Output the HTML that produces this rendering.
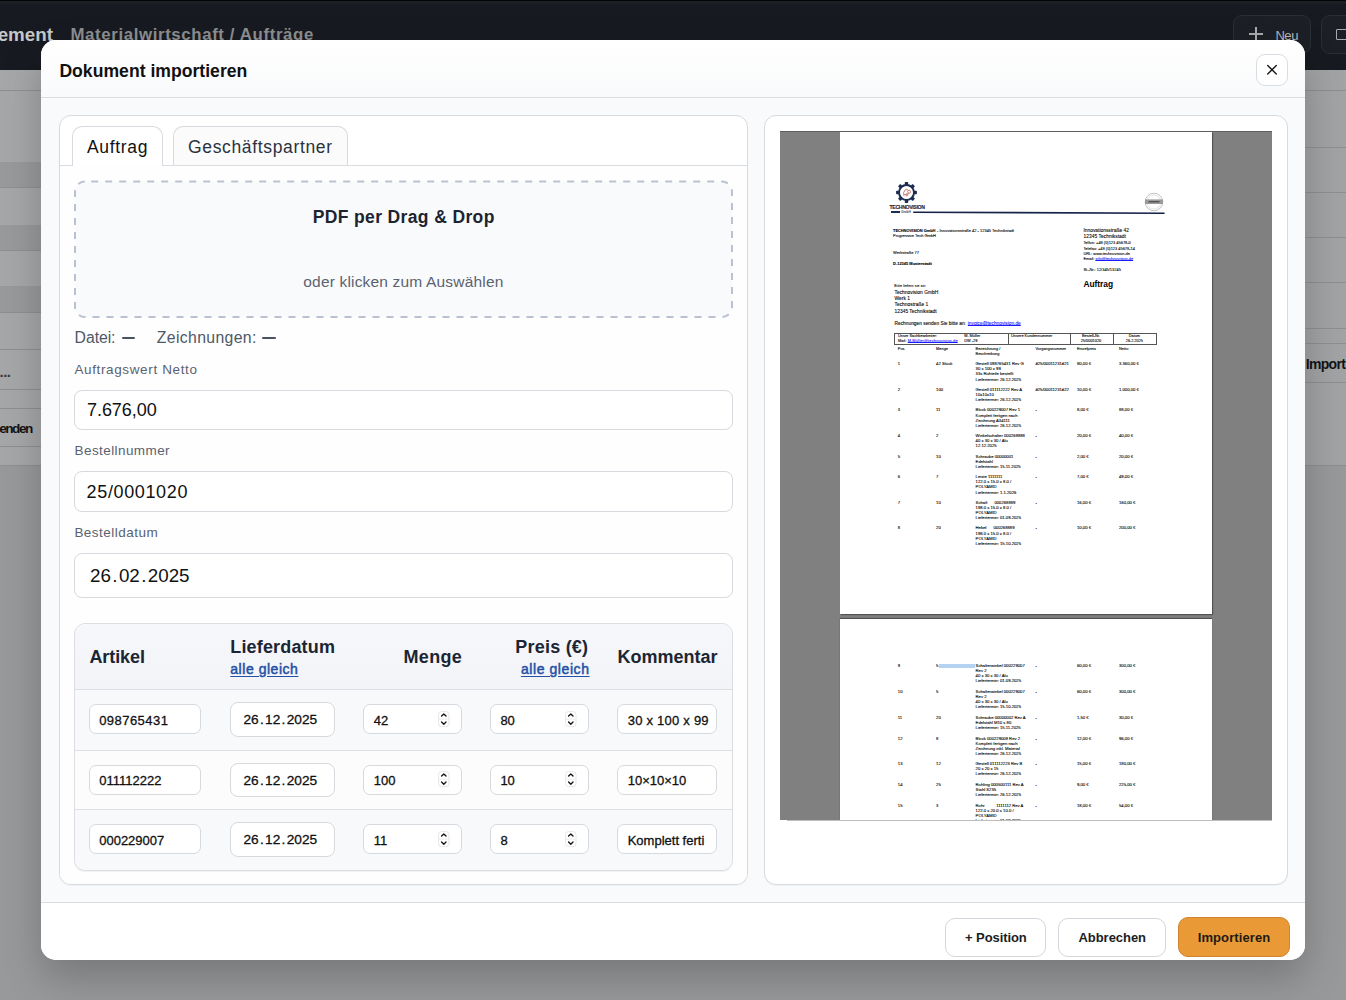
<!DOCTYPE html><html><head><meta charset="utf-8"><style>
*{box-sizing:border-box;margin:0;padding:0}
html,body{width:1346px;height:1000px;overflow:hidden;background:#999a9c;font-family:"Liberation Sans",sans-serif}
.a{position:absolute}
.t{position:absolute;white-space:pre;line-height:normal}
</style></head><body><div class="a" style="left:0;top:0;width:1346px;height:1000px;overflow:hidden"><div class="a" style="left:0px;top:0px;width:1346px;height:70px;background:#171a20"></div><div class="a" style="left:0px;top:0px;width:1346px;height:1.2px;background:#030406"></div><div class="a" style="left:0px;top:1.2px;width:1346px;height:2.4px;background:#1c1f24"></div><div class="a" style="left:0px;top:70px;width:1346px;height:395px;background:#a6a7a8"></div><div class="a" style="left:0px;top:465px;width:1346px;height:535px;background:#98999b"></div><div class="a" style="left:0px;top:162px;width:41px;height:25px;background:#999a9b"></div><div class="a" style="left:0px;top:225px;width:41px;height:25px;background:#999a9b"></div><div class="a" style="left:0px;top:286px;width:41px;height:26px;background:#999a9b"></div><div class="a" style="left:0px;top:90px;width:41px;height:1px;background:#8e8f91"></div><div class="a" style="left:0px;top:187px;width:41px;height:1px;background:#8e8f91"></div><div class="a" style="left:0px;top:250px;width:41px;height:1px;background:#8e8f91"></div><div class="a" style="left:0px;top:312px;width:41px;height:1px;background:#8e8f91"></div><div class="a" style="left:0px;top:349px;width:41px;height:1px;background:#8e8f91"></div><div class="a" style="left:0px;top:389px;width:41px;height:1px;background:#8e8f91"></div><div class="a" style="left:0px;top:408px;width:41px;height:1px;background:#8e8f91"></div><div class="a" style="left:0px;top:446px;width:41px;height:1px;background:#8e8f91"></div><div class="a" style="left:0px;top:465px;width:41px;height:1px;background:#8e8f91"></div><div class="a" style="left:1305px;top:70px;width:41px;height:395px;background:#a2a3a4"></div><div class="a" style="left:1305px;top:90px;width:41px;height:1px;background:#8e8f91"></div><div class="a" style="left:1305px;top:147px;width:41px;height:1px;background:#8e8f91"></div><div class="a" style="left:1305px;top:192px;width:41px;height:1px;background:#8e8f91"></div><div class="a" style="left:1305px;top:237px;width:41px;height:1px;background:#8e8f91"></div><div class="a" style="left:1305px;top:282px;width:41px;height:1px;background:#8e8f91"></div><div class="a" style="left:1305px;top:328px;width:41px;height:1px;background:#8e8f91"></div><div class="a" style="left:1305px;top:343px;width:41px;height:1px;background:#8e8f91"></div><div class="a" style="left:1305px;top:382px;width:41px;height:1px;background:#8e8f91"></div><div class="a" style="left:1305px;top:465px;width:41px;height:1px;background:#8e8f91"></div><div class="t" style="left:-0.50px;top:362.62px;font-size:15px;font-weight:700;color:#3a3a3a;letter-spacing:-0.494px;">...</div><div class="t" style="left:-0.80px;top:421.09px;font-size:13.6px;font-weight:700;color:#151515;letter-spacing:-1.488px;">enden</div><div class="t" style="left:1305.80px;top:356.33px;font-size:14px;font-weight:700;color:#141414;letter-spacing:-0.708px;">Import</div><div class="t" style="left:-61.82px;top:23.79px;font-size:18.8px;font-weight:700;color:#c6c7c9;">Management</div><div class="t" style="left:70.50px;top:25.40px;font-size:16.8px;font-weight:700;color:#8d8e90;letter-spacing:0.633px;">Materialwirtschaft / Aufträge</div><div class="a" style="left:1232.5px;top:14.5px;width:78px;height:39.5px;background:#1c2026;border:1px solid #2a2e35;border-radius:9px"></div><div class="a" style="left:1249px;top:33.3px;width:14px;height:1.5px;background:#a9abae"></div><div class="a" style="left:1255.3px;top:27px;width:1.5px;height:14px;background:#a9abae"></div><div class="t" style="left:1275.40px;top:28.23px;font-size:13px;color:#b5b7ba;letter-spacing:-0.428px;">Neu</div><div class="a" style="left:1321px;top:14.5px;width:40px;height:39.5px;background:#1c2026;border:1px solid #2a2e35;border-radius:9px"></div><div class="a" style="left:1336px;top:29px;width:12px;height:11px;border:1.5px solid #a9abae;border-radius:1px"></div><div class="a" style="left:41px;top:40px;width:1264px;height:920px;border-radius:15px;box-shadow:0 18px 40px rgba(0,0,0,.22);background:#f9fafc;overflow:hidden"><div class="a" style="left:0px;top:0px;width:1264px;height:58px;background:linear-gradient(#ffffff,#f9fafb);border-bottom:1px solid #dadcdf"></div><div class="a" style="left:0px;top:862px;width:1264px;height:58px;background:#fff;border-top:1px solid #dadcdf"></div></div><div class="t" style="left:59.40px;top:60.77px;font-size:17.6px;font-weight:700;color:#111;letter-spacing:0.013px;">Dokument importieren</div><div class="a" style="left:1256px;top:53.5px;width:32px;height:32px;background:#fff;border:1px solid #d9dce1;border-radius:9px"></div><svg class="a" style="left:1264px;top:61.5px" width="16" height="16" viewBox="0 0 16 16"><path d="M3.7 3.4 L12.3 12 M12.3 3.4 L3.7 12" stroke="#151515" stroke-width="1.35" stroke-linecap="round"/></svg><div class="a" style="left:59px;top:114.5px;width:689px;height:770.5px;background:#fff;border:1px solid #d8dade;border-radius:12px;box-shadow:0 1px 1px rgba(0,0,0,.04)"></div><div class="a" style="left:60px;top:166px;width:687px;height:718px;background:#fefefe;border-radius:0 0 11px 11px"></div><div class="a" style="left:60px;top:165px;width:687px;height:1px;background:#d9dce1"></div><div class="a" style="left:71.5px;top:125.5px;width:91px;height:40.5px;background:#fff;border:1px solid #d6d9de;border-bottom:none;border-radius:10px 10px 0 0"></div><div class="a" style="left:172.5px;top:125.5px;width:175px;height:39.5px;background:#fbfbfc;border:1px solid #d6d9de;border-bottom:none;border-radius:10px 10px 0 0"></div><div class="t" style="left:87.00px;top:136.66px;font-size:17.5px;color:#111;letter-spacing:0.660px;">Auftrag</div><div class="t" style="left:188.00px;top:136.66px;font-size:17.5px;color:#2a3240;letter-spacing:0.652px;">Geschäftspartner</div><svg class="a" style="left:73px;top:179.5px" width="662" height="140"><rect x="2" y="1.5" width="657" height="135.5" rx="10" ry="10" fill="#f9fafc" stroke="#b9c1d2" stroke-width="2" stroke-dasharray="7 7" stroke-dashoffset="7.8"/></svg><div class="t" style="left:312.65px;top:207.36px;font-size:17.5px;font-weight:700;color:#1c2430;letter-spacing:0.370px;">PDF per Drag &amp; Drop</div><div class="t" style="left:303.30px;top:273.07px;font-size:15.5px;color:#5b6370;letter-spacing:0.177px;">oder klicken zum Auswählen</div><div class="t" style="left:74.60px;top:328.60px;font-size:15.8px;color:#4f5866;letter-spacing:-0.076px;">Datei:</div><div class="a" style="left:121.5px;top:337.4px;width:13.4px;height:2px;background:#4a5262;border-radius:1px"></div><div class="t" style="left:156.80px;top:328.60px;font-size:15.8px;color:#4f5866;letter-spacing:0.350px;">Zeichnungen:</div><div class="a" style="left:262.4px;top:337.4px;width:13.4px;height:2px;background:#4a5262;border-radius:1px"></div><div class="t" style="left:74.40px;top:361.58px;font-size:13.5px;color:#5a6270;letter-spacing:0.634px;">Auftragswert Netto</div><div class="a" style="left:74px;top:389.5px;width:659px;height:40.5px;background:#fff;border:1px solid #d6d9de;border-radius:8px"></div><div class="t" style="left:87.00px;top:400.31px;font-size:18px;color:#111;letter-spacing:-0.052px;">7.676,00</div><div class="t" style="left:74.60px;top:443.18px;font-size:13.5px;color:#5a6270;letter-spacing:0.413px;">Bestellnummer</div><div class="a" style="left:74px;top:471px;width:659px;height:40.5px;background:#fff;border:1px solid #d6d9de;border-radius:8px"></div><div class="t" style="left:86.60px;top:481.91px;font-size:18px;color:#111;letter-spacing:0.635px;">25/0001020</div><div class="t" style="left:74.40px;top:524.78px;font-size:13.5px;color:#5a6270;letter-spacing:0.479px;">Bestelldatum</div><div class="a" style="left:74px;top:552.5px;width:659px;height:45.5px;background:#fff;border:1px solid #d6d9de;border-radius:8px"></div><div class="t" style="left:90.00px;top:564.79px;font-size:18.8px;color:#111;">26<span style="margin:0 1.4px">.</span>02<span style="margin:0 1.4px">.</span>2025</div><div class="a" style="left:74px;top:623px;width:659px;height:247.5px;background:#f9fafb;border:1px solid #dcdee2;border-radius:11px;box-shadow:0 1px 1px rgba(0,0,0,.06)"></div><div class="a" style="left:75px;top:624px;width:657px;height:65px;background:linear-gradient(#f6f7fa,#f2f4f7);border-radius:10px 10px 0 0"></div><div class="a" style="left:75px;top:689px;width:657px;height:1px;background:#dcdfe4"></div><div class="a" style="left:75px;top:690px;width:657px;height:59.5px;background:#f8f9fb"></div><div class="a" style="left:75px;top:749.5px;width:657px;height:1px;background:#dcdfe4"></div><div class="a" style="left:75px;top:750.5px;width:657px;height:58.5px;background:#fcfcfd"></div><div class="a" style="left:75px;top:809px;width:657px;height:1px;background:#dcdfe4"></div><div class="a" style="left:75px;top:810px;width:657px;height:59.5px;background:#f8f9fb;border-radius:0 0 10px 10px"></div><div class="t" style="left:89.40px;top:646.81px;font-size:18px;font-weight:700;color:#1c2533;letter-spacing:-0.071px;">Artikel</div><div class="t" style="left:230.30px;top:636.71px;font-size:18px;font-weight:700;color:#1c2533;letter-spacing:0.159px;">Lieferdatum</div><div class="t" style="left:230.30px;top:661.13px;font-size:14px;color:#2450a6;letter-spacing:0.533px;text-decoration:underline;text-underline-offset:2px;-webkit-text-stroke:0.5px #2450a6">alle gleich</div><div class="t" style="left:403.50px;top:646.71px;font-size:18px;font-weight:700;color:#1c2533;letter-spacing:0.321px;">Menge</div><div class="t" style="left:515.30px;top:636.71px;font-size:18px;font-weight:700;color:#1c2533;letter-spacing:0.218px;">Preis (€)</div><div class="t" style="left:520.90px;top:661.13px;font-size:14px;color:#2450a6;letter-spacing:0.583px;text-decoration:underline;text-underline-offset:2px;-webkit-text-stroke:0.5px #2450a6">alle gleich</div><div class="t" style="left:617.40px;top:646.91px;font-size:18px;font-weight:700;color:#1c2533;">Kommentar</div><div class="a" style="left:88.8px;top:704.3px;width:112.3px;height:30.2px;background:#fff;border:1px solid #d6d9de;border-radius:7px"></div><div class="t" style="left:99.20px;top:712.74px;font-size:13px;color:#111;letter-spacing:0.454px;-webkit-text-stroke:0.3px #111">098765431</div><div class="a" style="left:230.3px;top:702.3px;width:104.6px;height:34.7px;background:#fff;border:1px solid #d6d9de;border-radius:8px"></div><div class="t" style="left:243.40px;top:712.30px;font-size:13.7px;color:#111;-webkit-text-stroke:0.3px #111">26<span style="margin:0 1.3px">.</span>12<span style="margin:0 1.3px">.</span>2025</div><div class="a" style="left:363.4px;top:704.3px;width:98.4px;height:30.2px;background:#fff;border:1px solid #d6d9de;border-radius:7px"></div><div class="t" style="left:373.80px;top:712.74px;font-size:13px;color:#111;-webkit-text-stroke:0.3px #111">42</div><svg class="a" style="left:438.2px;top:710.5999999999999px" width="12" height="17" viewBox="0 0 12 17"><rect x="0.6" y="0.6" width="10.4" height="15" rx="3" fill="#fff" stroke="#e2e4e7" stroke-width="0.9"/><path d="M0.8 8.1 H10.8" stroke="#e6e8eb" stroke-width="0.8"/><path d="M3.6 5.1 L5.8 2.9 L8 5.1 M3.6 11 L5.8 13.2 L8 11" stroke="#161616" stroke-width="1.35" fill="none" stroke-linecap="round" stroke-linejoin="round"/></svg><div class="a" style="left:490.2px;top:704.3px;width:98.5px;height:30.2px;background:#fff;border:1px solid #d6d9de;border-radius:7px"></div><div class="t" style="left:500.40px;top:712.74px;font-size:13px;color:#111;-webkit-text-stroke:0.3px #111">80</div><svg class="a" style="left:565px;top:710.5999999999999px" width="12" height="17" viewBox="0 0 12 17"><rect x="0.6" y="0.6" width="10.4" height="15" rx="3" fill="#fff" stroke="#e2e4e7" stroke-width="0.9"/><path d="M0.8 8.1 H10.8" stroke="#e6e8eb" stroke-width="0.8"/><path d="M3.6 5.1 L5.8 2.9 L8 5.1 M3.6 11 L5.8 13.2 L8 11" stroke="#161616" stroke-width="1.35" fill="none" stroke-linecap="round" stroke-linejoin="round"/></svg><div class="a" style="left:617.4px;top:704.3px;width:100px;height:30.2px;background:#fff;border:1px solid #d6d9de;border-radius:7px;overflow:hidden"><div class="t" style="left:9.30px;top:7.44px;font-size:13px;color:#111;letter-spacing:0.236px;-webkit-text-stroke:0.3px #111">30 x 100 x 99</div></div><div class="a" style="left:88.8px;top:764.5px;width:112.3px;height:30.2px;background:#fff;border:1px solid #d6d9de;border-radius:7px"></div><div class="t" style="left:99.20px;top:772.94px;font-size:13px;color:#111;-webkit-text-stroke:0.3px #111">011112222</div><div class="a" style="left:230.3px;top:762.5px;width:104.6px;height:34.7px;background:#fff;border:1px solid #d6d9de;border-radius:8px"></div><div class="t" style="left:243.40px;top:772.50px;font-size:13.7px;color:#111;-webkit-text-stroke:0.3px #111">26<span style="margin:0 1.3px">.</span>12<span style="margin:0 1.3px">.</span>2025</div><div class="a" style="left:363.4px;top:764.5px;width:98.4px;height:30.2px;background:#fff;border:1px solid #d6d9de;border-radius:7px"></div><div class="t" style="left:373.80px;top:772.94px;font-size:13px;color:#111;-webkit-text-stroke:0.3px #111">100</div><svg class="a" style="left:438.2px;top:770.8px" width="12" height="17" viewBox="0 0 12 17"><rect x="0.6" y="0.6" width="10.4" height="15" rx="3" fill="#fff" stroke="#e2e4e7" stroke-width="0.9"/><path d="M0.8 8.1 H10.8" stroke="#e6e8eb" stroke-width="0.8"/><path d="M3.6 5.1 L5.8 2.9 L8 5.1 M3.6 11 L5.8 13.2 L8 11" stroke="#161616" stroke-width="1.35" fill="none" stroke-linecap="round" stroke-linejoin="round"/></svg><div class="a" style="left:490.2px;top:764.5px;width:98.5px;height:30.2px;background:#fff;border:1px solid #d6d9de;border-radius:7px"></div><div class="t" style="left:500.40px;top:772.94px;font-size:13px;color:#111;-webkit-text-stroke:0.3px #111">10</div><svg class="a" style="left:565px;top:770.8px" width="12" height="17" viewBox="0 0 12 17"><rect x="0.6" y="0.6" width="10.4" height="15" rx="3" fill="#fff" stroke="#e2e4e7" stroke-width="0.9"/><path d="M0.8 8.1 H10.8" stroke="#e6e8eb" stroke-width="0.8"/><path d="M3.6 5.1 L5.8 2.9 L8 5.1 M3.6 11 L5.8 13.2 L8 11" stroke="#161616" stroke-width="1.35" fill="none" stroke-linecap="round" stroke-linejoin="round"/></svg><div class="a" style="left:617.4px;top:764.5px;width:100px;height:30.2px;background:#fff;border:1px solid #d6d9de;border-radius:7px;overflow:hidden"><div class="t" style="left:9.30px;top:7.44px;font-size:13px;color:#111;-webkit-text-stroke:0.3px #111">10×10×10</div></div><div class="a" style="left:88.8px;top:824.3px;width:112.3px;height:30.2px;background:#fff;border:1px solid #d6d9de;border-radius:7px"></div><div class="t" style="left:99.20px;top:832.74px;font-size:13px;color:#111;-webkit-text-stroke:0.3px #111">000229007</div><div class="a" style="left:230.3px;top:822.3px;width:104.6px;height:34.7px;background:#fff;border:1px solid #d6d9de;border-radius:8px"></div><div class="t" style="left:243.40px;top:832.30px;font-size:13.7px;color:#111;-webkit-text-stroke:0.3px #111">26<span style="margin:0 1.3px">.</span>12<span style="margin:0 1.3px">.</span>2025</div><div class="a" style="left:363.4px;top:824.3px;width:98.4px;height:30.2px;background:#fff;border:1px solid #d6d9de;border-radius:7px"></div><div class="t" style="left:373.80px;top:832.74px;font-size:13px;color:#111;-webkit-text-stroke:0.3px #111">11</div><svg class="a" style="left:438.2px;top:830.5999999999999px" width="12" height="17" viewBox="0 0 12 17"><rect x="0.6" y="0.6" width="10.4" height="15" rx="3" fill="#fff" stroke="#e2e4e7" stroke-width="0.9"/><path d="M0.8 8.1 H10.8" stroke="#e6e8eb" stroke-width="0.8"/><path d="M3.6 5.1 L5.8 2.9 L8 5.1 M3.6 11 L5.8 13.2 L8 11" stroke="#161616" stroke-width="1.35" fill="none" stroke-linecap="round" stroke-linejoin="round"/></svg><div class="a" style="left:490.2px;top:824.3px;width:98.5px;height:30.2px;background:#fff;border:1px solid #d6d9de;border-radius:7px"></div><div class="t" style="left:500.40px;top:832.74px;font-size:13px;color:#111;-webkit-text-stroke:0.3px #111">8</div><svg class="a" style="left:565px;top:830.5999999999999px" width="12" height="17" viewBox="0 0 12 17"><rect x="0.6" y="0.6" width="10.4" height="15" rx="3" fill="#fff" stroke="#e2e4e7" stroke-width="0.9"/><path d="M0.8 8.1 H10.8" stroke="#e6e8eb" stroke-width="0.8"/><path d="M3.6 5.1 L5.8 2.9 L8 5.1 M3.6 11 L5.8 13.2 L8 11" stroke="#161616" stroke-width="1.35" fill="none" stroke-linecap="round" stroke-linejoin="round"/></svg><div class="a" style="left:617.4px;top:824.3px;width:100px;height:30.2px;background:#fff;border:1px solid #d6d9de;border-radius:7px;overflow:hidden"><div class="t" style="left:9.30px;top:7.44px;font-size:13px;color:#111;-webkit-text-stroke:0.3px #111">Komplett ferti</div></div><div class="a" style="left:764.4px;top:114.5px;width:524px;height:770.5px;background:#fff;border:1px solid #d8dade;border-radius:12px;box-shadow:0 1px 1px rgba(0,0,0,.04)"></div><div class="a" style="left:780px;top:130.5px;width:492px;height:689.5px;background:#808080;overflow:hidden"><div class="a" style="left:0;top:0;width:492px;height:1px;background:#5e5e5e"></div><div class="a" style="left:60px;top:1px;width:372px;height:482.5px;background:#fff;box-shadow:1px 1px 1px rgba(0,0,0,.35)"></div><div class="a" style="left:60px;top:488px;width:372px;height:260px;background:#fff;box-shadow:0 -1px 1px rgba(0,0,0,.35)"></div></div><div class="a" style="left:0;top:0;width:1346px;height:1000px;clip-path:inset(131px 74px 180px 780px)"><svg class="a" style="left:894px;top:179.7px" width="25" height="25" viewBox="0 0 25 25"><g transform="translate(12.5,12.5)" fill="#1d2d52"><rect x="-1.7" y="-10.4" width="3.4" height="3.6" rx="0.6" transform="rotate(0)"/><rect x="-1.7" y="-10.4" width="3.4" height="3.6" rx="0.6" transform="rotate(45)"/><rect x="-1.7" y="-10.4" width="3.4" height="3.6" rx="0.6" transform="rotate(90)"/><rect x="-1.7" y="-10.4" width="3.4" height="3.6" rx="0.6" transform="rotate(135)"/><rect x="-1.7" y="-10.4" width="3.4" height="3.6" rx="0.6" transform="rotate(180)"/><rect x="-1.7" y="-10.4" width="3.4" height="3.6" rx="0.6" transform="rotate(225)"/><rect x="-1.7" y="-10.4" width="3.4" height="3.6" rx="0.6" transform="rotate(270)"/><rect x="-1.7" y="-10.4" width="3.4" height="3.6" rx="0.6" transform="rotate(315)"/><circle r="7.4" fill="none" stroke="#1d2d52" stroke-width="2.1"/><circle r="6.3" fill="#fff"/><path d="M-2.5 3.5 Q-4 0 -1 -3 M-1 -3 Q1 -4 1.5 -2 M-2 2 Q0 3 2 1" stroke="#c46a5c" stroke-width="0.9" fill="none"/><circle cx="2.6" cy="-0.8" r="1.5" fill="none" stroke="#c46a5c" stroke-width="0.8"/><circle cx="0.4" cy="2.2" r="1.1" fill="none" stroke="#c46a5c" stroke-width="0.7"/></g></svg><div class="t" style="left:889.50px;top:204.22px;font-size:5.2px;font-weight:700;color:#1c2233;letter-spacing:-0.371px;-webkit-text-stroke:0.09px #1c2233;">TECHNOVISION</div><div class="t" style="left:901.30px;top:210.29px;font-size:3.2px;font-weight:700;color:#5a6a90;letter-spacing:-0.033px;-webkit-text-stroke:0.09px #5a6a90;">GmbH</div><div class="a" style="left:890.5px;top:211.4px;width:9px;height:1.5px;background:#1d2d52"></div><svg class="a" style="left:910px;top:208px" width="260" height="10"><path d="M3.8 4.2 L254 5.3" stroke="#16244a" stroke-width="1.6" stroke-linecap="round"/></svg><svg class="a" style="left:1144px;top:192px" width="20" height="20" viewBox="0 0 20 20"><circle cx="10" cy="10" r="8.8" fill="#fff" stroke="#9a9a9a" stroke-width="0.6"/><circle cx="10" cy="10" r="7" fill="none" stroke="#c8c8c8" stroke-width="0.5"/><rect x="1" y="7.4" width="18" height="4.6" fill="#9a9a9a"/><rect x="4.5" y="9" width="11" height="1.4" fill="#555"/></svg><div class="t" style="left:893.00px;top:227.88px;font-size:3.97px;font-weight:700;color:#000;letter-spacing:-0.046px;-webkit-text-stroke:0.09px #000;">TECHNOVISION GmbH</div><div class="t" style="left:937.00px;top:227.88px;font-size:3.97px;color:#000;-webkit-text-stroke:0.09px #000;">- Innovationsstraße 42 - 12345 Technikstadt</div><div class="t" style="left:893.00px;top:233.28px;font-size:3.97px;color:#000;-webkit-text-stroke:0.09px #000;">Progressive Tech GmbH</div><div class="t" style="left:893.00px;top:249.68px;font-size:3.97px;color:#000;-webkit-text-stroke:0.09px #000;">Werkstraße 77</div><div class="t" style="left:893.00px;top:261.18px;font-size:3.97px;font-weight:700;color:#000;-webkit-text-stroke:0.09px #000;">D-12345 Musterstadt</div><div class="t" style="left:1083.40px;top:227.79px;font-size:4.88px;color:#000;-webkit-text-stroke:0.09px #000;">Innovationsstraße 42</div><div class="t" style="left:1083.40px;top:234.39px;font-size:4.88px;color:#000;letter-spacing:0.037px;-webkit-text-stroke:0.09px #000;">12345 Technikstadt</div><div class="t" style="left:1083.40px;top:240.29px;font-size:3.95px;color:#000;-webkit-text-stroke:0.09px #000;">Telfon: +49 (0)123 45678-0</div><div class="t" style="left:1083.40px;top:245.69px;font-size:3.95px;color:#000;-webkit-text-stroke:0.09px #000;">Telefax: +49 (0)123 45678-14</div><div class="t" style="left:1083.40px;top:251.09px;font-size:3.95px;color:#000;letter-spacing:-0.017px;-webkit-text-stroke:0.09px #000;">URL: www.technovision.de</div><div class="t" style="left:1083.40px;top:256.49px;font-size:3.95px;color:#000;-webkit-text-stroke:0.09px #000;">Email:</div><div class="t" style="left:1095.40px;top:256.49px;font-size:3.95px;color:#1a1aff;-webkit-text-stroke:0.09px #1a1aff;text-decoration:underline;text-decoration-thickness:0.4px;text-underline-offset:0.2px">info@technovision.de</div><div class="t" style="left:1083.40px;top:267.29px;font-size:3.95px;color:#000;-webkit-text-stroke:0.09px #000;">St.-Nr.: 12/345/13245</div><div class="t" style="left:1083.40px;top:278.60px;font-size:8.4px;font-weight:700;color:#000;letter-spacing:-0.010px;">Auftrag</div><div class="t" style="left:894.30px;top:284.18px;font-size:3.4px;color:#000;letter-spacing:0.186px;-webkit-text-stroke:0.09px #000;">Bitte liefern sie an:</div><div class="t" style="left:894.50px;top:289.58px;font-size:4.9px;color:#000;-webkit-text-stroke:0.09px #000;">Technovision GmbH</div><div class="t" style="left:894.50px;top:295.95px;font-size:4.9px;color:#000;-webkit-text-stroke:0.09px #000;">Werk 1</div><div class="t" style="left:894.50px;top:302.32px;font-size:4.9px;color:#000;-webkit-text-stroke:0.09px #000;">Technostraße 1</div><div class="t" style="left:894.50px;top:308.69px;font-size:4.9px;color:#000;-webkit-text-stroke:0.09px #000;">12345 Technikstadt</div><div class="t" style="left:894.50px;top:321.22px;font-size:4.83px;color:#000;-webkit-text-stroke:0.09px #000;">Rechnungen senden Sie bitte an:</div><div class="t" style="left:967.80px;top:321.22px;font-size:4.83px;color:#1a1aff;letter-spacing:-0.023px;-webkit-text-stroke:0.09px #1a1aff;text-decoration:underline;text-decoration-thickness:0.4px;text-underline-offset:0.2px">invoice@technovision.de</div><div class="a" style="left:894.3px;top:332.5px;width:262.5px;height:12px;border:0.6px solid #555"></div><div class="a" style="left:1007.6px;top:332.5px;width:0.6px;height:12px;background:#555"></div><div class="a" style="left:1069.7px;top:332.5px;width:0.6px;height:12px;background:#555"></div><div class="a" style="left:1112.9px;top:332.5px;width:0.6px;height:12px;background:#555"></div><div class="t" style="left:898.00px;top:333.31px;font-size:3.9px;color:#000;-webkit-text-stroke:0.09px #000;">Unser Sachbearbeiter:</div><div class="t" style="left:898.00px;top:338.11px;font-size:3.9px;color:#000;-webkit-text-stroke:0.09px #000;">Mail:</div><div class="t" style="left:907.70px;top:338.11px;font-size:3.9px;color:#1a1aff;letter-spacing:0.173px;-webkit-text-stroke:0.09px #1a1aff;text-decoration:underline;text-decoration-thickness:0.4px;text-underline-offset:0.2px">M.Müller@technovision.de</div><div class="t" style="left:964.20px;top:333.31px;font-size:3.9px;color:#000;-webkit-text-stroke:0.09px #000;">M. Müller</div><div class="t" style="left:964.20px;top:338.11px;font-size:3.9px;color:#000;-webkit-text-stroke:0.09px #000;">DW -29</div><div class="t" style="left:1011.00px;top:333.31px;font-size:3.9px;color:#000;-webkit-text-stroke:0.09px #000;">Unsere Kundennummer</div><div class="t" style="left:1082.01px;top:333.31px;font-size:3.9px;color:#000;-webkit-text-stroke:0.09px #000;">Bestell-Nr.</div><div class="t" style="left:1080.70px;top:338.11px;font-size:3.9px;color:#000;-webkit-text-stroke:0.09px #000;">25/0001020</div><div class="t" style="left:1128.66px;top:333.31px;font-size:3.9px;color:#000;-webkit-text-stroke:0.09px #000;">Datum</div><div class="t" style="left:1125.72px;top:338.11px;font-size:3.9px;color:#000;-webkit-text-stroke:0.09px #000;">26.2.2025</div><div class="t" style="left:897.80px;top:345.71px;font-size:3.9px;color:#000;-webkit-text-stroke:0.09px #000;">Pos</div><div class="t" style="left:936.10px;top:345.71px;font-size:3.9px;color:#000;-webkit-text-stroke:0.09px #000;">Menge</div><div class="t" style="left:975.60px;top:345.71px;font-size:3.9px;color:#000;-webkit-text-stroke:0.09px #000;">Bezeichnung /</div><div class="t" style="left:1035.40px;top:345.71px;font-size:3.9px;color:#000;-webkit-text-stroke:0.09px #000;">Vorgangsnummer</div><div class="t" style="left:1077.00px;top:345.71px;font-size:3.9px;color:#000;-webkit-text-stroke:0.09px #000;">Einzelpreis</div><div class="t" style="left:1119.00px;top:345.71px;font-size:3.9px;color:#000;-webkit-text-stroke:0.09px #000;">Netto</div><div class="t" style="left:975.60px;top:350.61px;font-size:3.9px;color:#000;-webkit-text-stroke:0.09px #000;">Beschreibung</div><div class="a" style="left:938.5px;top:663.9px;width:36.2px;height:3.9px;background:#b6d2f2"></div><div class="t" style="left:897.80px;top:361.35px;font-size:4.2px;color:#000;-webkit-text-stroke:0.09px #000;">1</div><div class="t" style="left:936.10px;top:361.35px;font-size:4.2px;color:#000;-webkit-text-stroke:0.09px #000;">42 Stück</div><div class="t" style="left:975.60px;top:361.35px;font-size:4.2px;color:#000;-webkit-text-stroke:0.09px #000;">Gestell 098765431 Rev G</div><div class="t" style="left:975.60px;top:366.40px;font-size:4.2px;color:#000;-webkit-text-stroke:0.09px #000;">30 x 100 x 99</div><div class="t" style="left:975.60px;top:371.45px;font-size:4.2px;color:#000;-webkit-text-stroke:0.09px #000;">33x Rohteile bestellt</div><div class="t" style="left:975.60px;top:376.50px;font-size:4.2px;color:#000;-webkit-text-stroke:0.09px #000;">Liefertermin: 26.12.2025</div><div class="t" style="left:1035.40px;top:361.35px;font-size:4.2px;color:#000;-webkit-text-stroke:0.09px #000;">#25/00011231#21</div><div class="t" style="left:1077.00px;top:361.35px;font-size:4.2px;color:#000;-webkit-text-stroke:0.09px #000;">80,00 €</div><div class="t" style="left:1119.00px;top:361.35px;font-size:4.2px;color:#000;-webkit-text-stroke:0.09px #000;">3.360,00 €</div><div class="t" style="left:897.80px;top:386.75px;font-size:4.2px;color:#000;-webkit-text-stroke:0.09px #000;">2</div><div class="t" style="left:936.10px;top:386.75px;font-size:4.2px;color:#000;-webkit-text-stroke:0.09px #000;">100</div><div class="t" style="left:975.60px;top:386.75px;font-size:4.2px;color:#000;-webkit-text-stroke:0.09px #000;">Gestell 011112222 Rev A</div><div class="t" style="left:975.60px;top:391.80px;font-size:4.2px;color:#000;-webkit-text-stroke:0.09px #000;">10x10x10</div><div class="t" style="left:975.60px;top:396.85px;font-size:4.2px;color:#000;-webkit-text-stroke:0.09px #000;">Liefertermin: 26.12.2025</div><div class="t" style="left:1035.40px;top:386.75px;font-size:4.2px;color:#000;-webkit-text-stroke:0.09px #000;">#25/00011231#22</div><div class="t" style="left:1077.00px;top:386.75px;font-size:4.2px;color:#000;-webkit-text-stroke:0.09px #000;">10,00 €</div><div class="t" style="left:1119.00px;top:386.75px;font-size:4.2px;color:#000;-webkit-text-stroke:0.09px #000;">1.000,00 €</div><div class="t" style="left:897.80px;top:407.45px;font-size:4.2px;color:#000;-webkit-text-stroke:0.09px #000;">3</div><div class="t" style="left:936.10px;top:407.45px;font-size:4.2px;color:#000;-webkit-text-stroke:0.09px #000;">11</div><div class="t" style="left:975.60px;top:407.45px;font-size:4.2px;color:#000;-webkit-text-stroke:0.09px #000;">Block 000229007 Rev 1</div><div class="t" style="left:975.60px;top:412.50px;font-size:4.2px;color:#000;-webkit-text-stroke:0.09px #000;">Komplett fertigen nach</div><div class="t" style="left:975.60px;top:417.55px;font-size:4.2px;color:#000;-webkit-text-stroke:0.09px #000;">Zeichnung A34111</div><div class="t" style="left:975.60px;top:422.60px;font-size:4.2px;color:#000;-webkit-text-stroke:0.09px #000;">Liefertermin: 26.12.2025</div><div class="t" style="left:1035.40px;top:407.45px;font-size:4.2px;color:#000;-webkit-text-stroke:0.09px #000;">-</div><div class="t" style="left:1077.00px;top:407.45px;font-size:4.2px;color:#000;-webkit-text-stroke:0.09px #000;">8,00 €</div><div class="t" style="left:1119.00px;top:407.45px;font-size:4.2px;color:#000;-webkit-text-stroke:0.09px #000;">88,00 €</div><div class="t" style="left:897.80px;top:432.75px;font-size:4.2px;color:#000;-webkit-text-stroke:0.09px #000;">4</div><div class="t" style="left:936.10px;top:432.75px;font-size:4.2px;color:#000;-webkit-text-stroke:0.09px #000;">2</div><div class="t" style="left:975.60px;top:432.75px;font-size:4.2px;color:#000;-webkit-text-stroke:0.09px #000;">Winkelschalter 000268888</div><div class="t" style="left:975.60px;top:437.80px;font-size:4.2px;color:#000;-webkit-text-stroke:0.09px #000;">40 x 30 x 30 / Alu</div><div class="t" style="left:975.60px;top:442.85px;font-size:4.2px;color:#000;-webkit-text-stroke:0.09px #000;">12.12.2025</div><div class="t" style="left:1035.40px;top:432.75px;font-size:4.2px;color:#000;-webkit-text-stroke:0.09px #000;">-</div><div class="t" style="left:1077.00px;top:432.75px;font-size:4.2px;color:#000;-webkit-text-stroke:0.09px #000;">20,00 €</div><div class="t" style="left:1119.00px;top:432.75px;font-size:4.2px;color:#000;-webkit-text-stroke:0.09px #000;">40,00 €</div><div class="t" style="left:897.80px;top:453.55px;font-size:4.2px;color:#000;-webkit-text-stroke:0.09px #000;">5</div><div class="t" style="left:936.10px;top:453.55px;font-size:4.2px;color:#000;-webkit-text-stroke:0.09px #000;">10</div><div class="t" style="left:975.60px;top:453.55px;font-size:4.2px;color:#000;-webkit-text-stroke:0.09px #000;">Schraube 00000001</div><div class="t" style="left:975.60px;top:458.60px;font-size:4.2px;color:#000;-webkit-text-stroke:0.09px #000;">Edelstahl</div><div class="t" style="left:975.60px;top:463.65px;font-size:4.2px;color:#000;-webkit-text-stroke:0.09px #000;">Liefertermin: 15.11.2025</div><div class="t" style="left:1035.40px;top:453.55px;font-size:4.2px;color:#000;-webkit-text-stroke:0.09px #000;">-</div><div class="t" style="left:1077.00px;top:453.55px;font-size:4.2px;color:#000;-webkit-text-stroke:0.09px #000;">2,00 €</div><div class="t" style="left:1119.00px;top:453.55px;font-size:4.2px;color:#000;-webkit-text-stroke:0.09px #000;">20,00 €</div><div class="t" style="left:897.80px;top:474.35px;font-size:4.2px;color:#000;-webkit-text-stroke:0.09px #000;">6</div><div class="t" style="left:936.10px;top:474.35px;font-size:4.2px;color:#000;-webkit-text-stroke:0.09px #000;">7</div><div class="t" style="left:975.60px;top:474.35px;font-size:4.2px;color:#000;-webkit-text-stroke:0.09px #000;">Leiste 1111111</div><div class="t" style="left:975.60px;top:479.40px;font-size:4.2px;color:#000;-webkit-text-stroke:0.09px #000;">122.0 x 15.0 x 8.0 /</div><div class="t" style="left:975.60px;top:484.45px;font-size:4.2px;color:#000;-webkit-text-stroke:0.09px #000;">POLYAMID</div><div class="t" style="left:975.60px;top:489.50px;font-size:4.2px;color:#000;-webkit-text-stroke:0.09px #000;">Liefertermin: 1.1.2026</div><div class="t" style="left:1035.40px;top:474.35px;font-size:4.2px;color:#000;-webkit-text-stroke:0.09px #000;">-</div><div class="t" style="left:1077.00px;top:474.35px;font-size:4.2px;color:#000;-webkit-text-stroke:0.09px #000;">7,00 €</div><div class="t" style="left:1119.00px;top:474.35px;font-size:4.2px;color:#000;-webkit-text-stroke:0.09px #000;">49,00 €</div><div class="t" style="left:897.80px;top:500.15px;font-size:4.2px;color:#000;-webkit-text-stroke:0.09px #000;">7</div><div class="t" style="left:936.10px;top:500.15px;font-size:4.2px;color:#000;-webkit-text-stroke:0.09px #000;">10</div><div class="t" style="left:975.60px;top:500.15px;font-size:4.2px;color:#000;-webkit-text-stroke:0.09px #000;">Schaft      000268889</div><div class="t" style="left:975.60px;top:505.20px;font-size:4.2px;color:#000;-webkit-text-stroke:0.09px #000;">198.0 x 15.0 x 8.0 /</div><div class="t" style="left:975.60px;top:510.25px;font-size:4.2px;color:#000;-webkit-text-stroke:0.09px #000;">POLYAMID</div><div class="t" style="left:975.60px;top:515.30px;font-size:4.2px;color:#000;-webkit-text-stroke:0.09px #000;">Liefertermin: 01.09.2025</div><div class="t" style="left:1035.40px;top:500.15px;font-size:4.2px;color:#000;-webkit-text-stroke:0.09px #000;">-</div><div class="t" style="left:1077.00px;top:500.15px;font-size:4.2px;color:#000;-webkit-text-stroke:0.09px #000;">16,00 €</div><div class="t" style="left:1119.00px;top:500.15px;font-size:4.2px;color:#000;-webkit-text-stroke:0.09px #000;">160,00 €</div><div class="t" style="left:897.80px;top:525.45px;font-size:4.2px;color:#000;-webkit-text-stroke:0.09px #000;">8</div><div class="t" style="left:936.10px;top:525.45px;font-size:4.2px;color:#000;-webkit-text-stroke:0.09px #000;">20</div><div class="t" style="left:975.60px;top:525.45px;font-size:4.2px;color:#000;-webkit-text-stroke:0.09px #000;">Hebel      000268889</div><div class="t" style="left:975.60px;top:530.50px;font-size:4.2px;color:#000;-webkit-text-stroke:0.09px #000;">198.0 x 15.0 x 8.0 /</div><div class="t" style="left:975.60px;top:535.55px;font-size:4.2px;color:#000;-webkit-text-stroke:0.09px #000;">POLYAMID</div><div class="t" style="left:975.60px;top:540.60px;font-size:4.2px;color:#000;-webkit-text-stroke:0.09px #000;">Liefertermin: 15.10.2025</div><div class="t" style="left:1035.40px;top:525.45px;font-size:4.2px;color:#000;-webkit-text-stroke:0.09px #000;">-</div><div class="t" style="left:1077.00px;top:525.45px;font-size:4.2px;color:#000;-webkit-text-stroke:0.09px #000;">10,00 €</div><div class="t" style="left:1119.00px;top:525.45px;font-size:4.2px;color:#000;-webkit-text-stroke:0.09px #000;">200,00 €</div><div class="t" style="left:897.80px;top:663.15px;font-size:4.2px;color:#000;-webkit-text-stroke:0.09px #000;">9</div><div class="t" style="left:936.10px;top:663.15px;font-size:4.2px;color:#000;-webkit-text-stroke:0.09px #000;">5</div><div class="t" style="left:975.60px;top:663.15px;font-size:4.2px;color:#000;-webkit-text-stroke:0.09px #000;">Schalterwinkel 000229007</div><div class="t" style="left:975.60px;top:668.20px;font-size:4.2px;color:#000;-webkit-text-stroke:0.09px #000;">Rev 2</div><div class="t" style="left:975.60px;top:673.25px;font-size:4.2px;color:#000;-webkit-text-stroke:0.09px #000;">40 x 30 x 30 / Alu</div><div class="t" style="left:975.60px;top:678.30px;font-size:4.2px;color:#000;-webkit-text-stroke:0.09px #000;">Liefertermin: 01.09.2025</div><div class="t" style="left:1035.40px;top:663.15px;font-size:4.2px;color:#000;-webkit-text-stroke:0.09px #000;">-</div><div class="t" style="left:1077.00px;top:663.15px;font-size:4.2px;color:#000;-webkit-text-stroke:0.09px #000;">60,00 €</div><div class="t" style="left:1119.00px;top:663.15px;font-size:4.2px;color:#000;-webkit-text-stroke:0.09px #000;">300,00 €</div><div class="t" style="left:897.80px;top:689.25px;font-size:4.2px;color:#000;-webkit-text-stroke:0.09px #000;">10</div><div class="t" style="left:936.10px;top:689.25px;font-size:4.2px;color:#000;-webkit-text-stroke:0.09px #000;">5</div><div class="t" style="left:975.60px;top:689.25px;font-size:4.2px;color:#000;-webkit-text-stroke:0.09px #000;">Schalterwinkel 000229007</div><div class="t" style="left:975.60px;top:694.30px;font-size:4.2px;color:#000;-webkit-text-stroke:0.09px #000;">Rev 2</div><div class="t" style="left:975.60px;top:699.35px;font-size:4.2px;color:#000;-webkit-text-stroke:0.09px #000;">40 x 30 x 30 / Alu</div><div class="t" style="left:975.60px;top:704.40px;font-size:4.2px;color:#000;-webkit-text-stroke:0.09px #000;">Liefertermin: 15.10.2025</div><div class="t" style="left:1035.40px;top:689.25px;font-size:4.2px;color:#000;-webkit-text-stroke:0.09px #000;">-</div><div class="t" style="left:1077.00px;top:689.25px;font-size:4.2px;color:#000;-webkit-text-stroke:0.09px #000;">60,00 €</div><div class="t" style="left:1119.00px;top:689.25px;font-size:4.2px;color:#000;-webkit-text-stroke:0.09px #000;">300,00 €</div><div class="t" style="left:897.80px;top:714.75px;font-size:4.2px;color:#000;-webkit-text-stroke:0.09px #000;">11</div><div class="t" style="left:936.10px;top:714.75px;font-size:4.2px;color:#000;-webkit-text-stroke:0.09px #000;">20</div><div class="t" style="left:975.60px;top:714.75px;font-size:4.2px;color:#000;-webkit-text-stroke:0.09px #000;">Schraube 00000002 Rev A</div><div class="t" style="left:975.60px;top:719.80px;font-size:4.2px;color:#000;-webkit-text-stroke:0.09px #000;">Edelstahl M10 x 80</div><div class="t" style="left:975.60px;top:724.85px;font-size:4.2px;color:#000;-webkit-text-stroke:0.09px #000;">Liefertermin: 15.11.2025</div><div class="t" style="left:1035.40px;top:714.75px;font-size:4.2px;color:#000;-webkit-text-stroke:0.09px #000;">-</div><div class="t" style="left:1077.00px;top:714.75px;font-size:4.2px;color:#000;-webkit-text-stroke:0.09px #000;">1,50 €</div><div class="t" style="left:1119.00px;top:714.75px;font-size:4.2px;color:#000;-webkit-text-stroke:0.09px #000;">30,00 €</div><div class="t" style="left:897.80px;top:735.65px;font-size:4.2px;color:#000;-webkit-text-stroke:0.09px #000;">12</div><div class="t" style="left:936.10px;top:735.65px;font-size:4.2px;color:#000;-webkit-text-stroke:0.09px #000;">8</div><div class="t" style="left:975.60px;top:735.65px;font-size:4.2px;color:#000;-webkit-text-stroke:0.09px #000;">Block 000229008 Rev 2</div><div class="t" style="left:975.60px;top:740.70px;font-size:4.2px;color:#000;-webkit-text-stroke:0.09px #000;">Komplett fertigen nach</div><div class="t" style="left:975.60px;top:745.75px;font-size:4.2px;color:#000;-webkit-text-stroke:0.09px #000;">Zeichnung inkl. Material</div><div class="t" style="left:975.60px;top:750.80px;font-size:4.2px;color:#000;-webkit-text-stroke:0.09px #000;">Liefertermin: 26.12.2025</div><div class="t" style="left:1035.40px;top:735.65px;font-size:4.2px;color:#000;-webkit-text-stroke:0.09px #000;">-</div><div class="t" style="left:1077.00px;top:735.65px;font-size:4.2px;color:#000;-webkit-text-stroke:0.09px #000;">12,00 €</div><div class="t" style="left:1119.00px;top:735.65px;font-size:4.2px;color:#000;-webkit-text-stroke:0.09px #000;">96,00 €</div><div class="t" style="left:897.80px;top:761.15px;font-size:4.2px;color:#000;-webkit-text-stroke:0.09px #000;">13</div><div class="t" style="left:936.10px;top:761.15px;font-size:4.2px;color:#000;-webkit-text-stroke:0.09px #000;">12</div><div class="t" style="left:975.60px;top:761.15px;font-size:4.2px;color:#000;-webkit-text-stroke:0.09px #000;">Gestell 011112223 Rev B</div><div class="t" style="left:975.60px;top:766.20px;font-size:4.2px;color:#000;-webkit-text-stroke:0.09px #000;">20 x 20 x 15</div><div class="t" style="left:975.60px;top:771.25px;font-size:4.2px;color:#000;-webkit-text-stroke:0.09px #000;">Liefertermin: 26.12.2025</div><div class="t" style="left:1035.40px;top:761.15px;font-size:4.2px;color:#000;-webkit-text-stroke:0.09px #000;">-</div><div class="t" style="left:1077.00px;top:761.15px;font-size:4.2px;color:#000;-webkit-text-stroke:0.09px #000;">15,00 €</div><div class="t" style="left:1119.00px;top:761.15px;font-size:4.2px;color:#000;-webkit-text-stroke:0.09px #000;">180,00 €</div><div class="t" style="left:897.80px;top:781.95px;font-size:4.2px;color:#000;-webkit-text-stroke:0.09px #000;">14</div><div class="t" style="left:936.10px;top:781.95px;font-size:4.2px;color:#000;-webkit-text-stroke:0.09px #000;">25</div><div class="t" style="left:975.60px;top:781.95px;font-size:4.2px;color:#000;-webkit-text-stroke:0.09px #000;">Rohling 000500111 Rev A</div><div class="t" style="left:975.60px;top:787.00px;font-size:4.2px;color:#000;-webkit-text-stroke:0.09px #000;">Stahl S235</div><div class="t" style="left:975.60px;top:792.05px;font-size:4.2px;color:#000;-webkit-text-stroke:0.09px #000;">Liefertermin: 26.12.2025</div><div class="t" style="left:1035.40px;top:781.95px;font-size:4.2px;color:#000;-webkit-text-stroke:0.09px #000;">-</div><div class="t" style="left:1077.00px;top:781.95px;font-size:4.2px;color:#000;-webkit-text-stroke:0.09px #000;">9,00 €</div><div class="t" style="left:1119.00px;top:781.95px;font-size:4.2px;color:#000;-webkit-text-stroke:0.09px #000;">225,00 €</div><div class="t" style="left:897.80px;top:802.75px;font-size:4.2px;color:#000;-webkit-text-stroke:0.09px #000;">15</div><div class="t" style="left:936.10px;top:802.75px;font-size:4.2px;color:#000;-webkit-text-stroke:0.09px #000;">3</div><div class="t" style="left:975.60px;top:802.75px;font-size:4.2px;color:#000;-webkit-text-stroke:0.09px #000;">Rohr          1111112 Rev A</div><div class="t" style="left:975.60px;top:807.80px;font-size:4.2px;color:#000;-webkit-text-stroke:0.09px #000;">122.0 x 20.0 x 10.0 /</div><div class="t" style="left:975.60px;top:812.85px;font-size:4.2px;color:#000;-webkit-text-stroke:0.09px #000;">POLYAMID</div><div class="t" style="left:975.60px;top:817.90px;font-size:4.2px;color:#000;-webkit-text-stroke:0.09px #000;">Liefertermin: 01.09.2025</div><div class="t" style="left:1035.40px;top:802.75px;font-size:4.2px;color:#000;-webkit-text-stroke:0.09px #000;">-</div><div class="t" style="left:1077.00px;top:802.75px;font-size:4.2px;color:#000;-webkit-text-stroke:0.09px #000;">18,00 €</div><div class="t" style="left:1119.00px;top:802.75px;font-size:4.2px;color:#000;-webkit-text-stroke:0.09px #000;">54,00 €</div></div><div class="a" style="left:787px;top:819.6px;width:485px;height:0.8px;background:#bdbdbd"></div><div class="a" style="left:945.3px;top:917.5px;width:101px;height:39.2px;background:#fff;border:1px solid #d3d6db;border-radius:10px"></div><div class="t" style="left:965.00px;top:930.34px;font-size:13px;font-weight:700;color:#1a1d22;letter-spacing:-0.078px;">+ Position</div><div class="a" style="left:1058.4px;top:917.5px;width:107.5px;height:39.2px;background:#fff;border:1px solid #d3d6db;border-radius:10px"></div><div class="t" style="left:1078.50px;top:930.34px;font-size:13px;font-weight:700;color:#1a1d22;letter-spacing:-0.049px;">Abbrechen</div><div class="a" style="left:1178px;top:917px;width:112px;height:39.6px;background:#e99a36;border:1px solid #cf8430;border-radius:10px"></div><div class="t" style="left:1197.70px;top:930.34px;font-size:13px;font-weight:700;color:#1f1a14;letter-spacing:0.100px;">Importieren</div></div></body></html>
